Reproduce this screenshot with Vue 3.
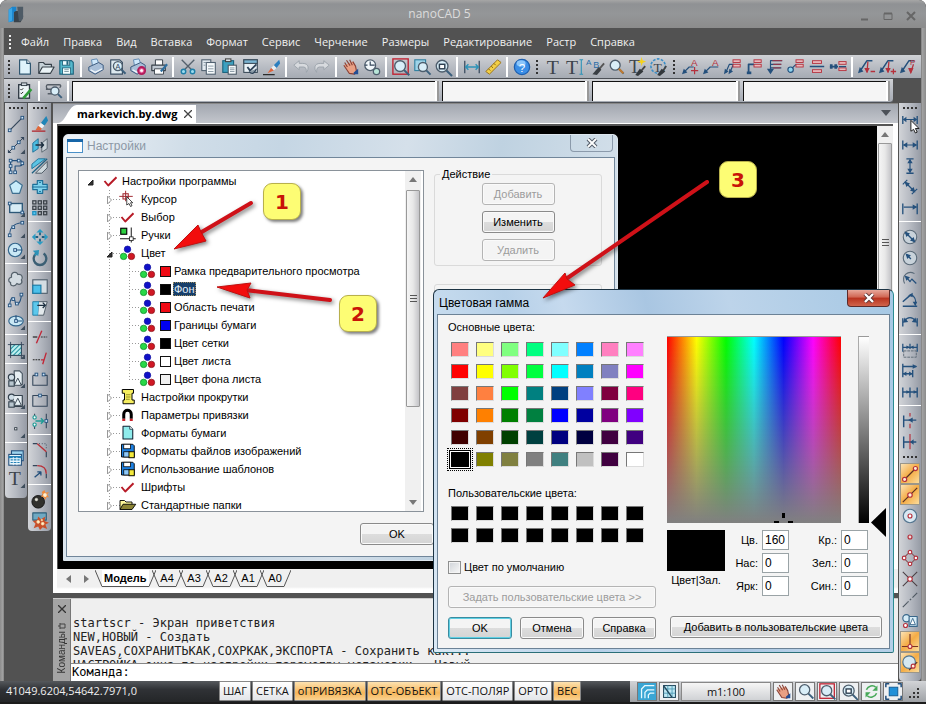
<script setup>
import { ref } from 'vue'

const NAVY = '#24507c'
const DARK = '#34465a'
const RED = '#b5303c'
const TEAL = '#2c93b8'
const SKY = '#8ed4ee'

/* Small builders for the icon markup; every icon sits on a 20 x 20 grid. */
const p = (d, stroke = NAVY, fill = 'none', w = 1.3) =>
  `<path d="${d}" stroke="${stroke}" fill="${fill}" stroke-width="${w}" stroke-linejoin="round"/>`
const c = (x, y, r, stroke = NAVY, fill = 'none', w = 1.3) =>
  `<circle cx="${x}" cy="${y}" r="${r}" stroke="${stroke}" fill="${fill}" stroke-width="${w}"/>`
const f = (d, fill) => `<path d="${d}" fill="${fill}"/>`
const r = (x, y, w, h, stroke = NAVY, fill = 'none', sw = 1.2) =>
  `<rect x="${x}" y="${y}" width="${w}" height="${h}" stroke="${stroke}" fill="${fill}" stroke-width="${sw}"/>`
const t = (x, y, s, ch, fill = DARK, family = 'Liberation Sans') =>
  `<text x="${x}" y="${y}" font-size="${s}" fill="${fill}" font-family="${family}">${ch}</text>`
const node = (x, y) => r(x - 1.5, y - 1.5, 3, 3, NAVY, '#cfe6fa', 1)
const more = f('M20 15v5h-5z', '#3e4d5c')
const lens = (x, y, q) =>
  p(`M${x + q * 0.7} ${y + q * 0.7}L${x + q * 1.7} ${y + q * 1.7}`, '#3b5f7c', 'none', 2.2) +
  c(x, y, q, '#4d5d6c', '#d9eef8', 1.5)
const hand =
  p('M3 5l3 5M5 2.500l4 6M8.500 2l3 6M2 8l6 9 6 1 2-4-1-5-3-5', '#8a4338', '#e9a084', 1.3) +
  f('M13 16l5-4v6h-5z', '#234e94')
const printer =
  p('M6 8l-1-6 6-1 2 5', '#5a86b0', '#cfe8fb', 1) +
  p('M2 10l11-5 5 3v5l-9 5-7-4z', '#3d5b80', '#a9bfd8', 1.1) +
  p('M4 13l5 3 8-4', '#f3f8fc', 'none', 1.4)
const brushTip = f('M18 2l-6 6 3 3 4-5z', '#2a7fc0') + f('M12 8l-3 3 3 3 3-3z', '#e8eef2') + f('M9 11l-4 6 7-3z', '#e0633a')
const redBars = (y) => r(10, y, 8, 3, RED, '#e9b9bc', 1) + r(10, y + 5, 8, 3, RED, '#e9b9bc', 1)
const floppy =
  p('M2 1h15l2 2v15H2z', '#000', '#1c7fe0', 1.2) + r(5, 1, 9, 6, '#000', '#fff', 1) +
  r(5, 11, 8, 7, '#000', '#8ec8f8', 1) + r(12, 11, 7, 8, '#000', '#f4ea3c', 1.2)
const rgb =
  c(10, 5, 4.3, '#1414a0', '#1010c8', 1) + c(4.8, 14.500, 4.3, '#108a28', '#28d848', 1) + c(15.200, 14.500, 4.3, '#8a1018', '#d01824', 1)

const icons = {
  new: p('M4 2h8l4 4v12H4z', '#2f5670', '#dff3fb') + p('M12 2v4h4', '#2f5670', '#fff'),
  open: p('M2 17V5h5l2 2h7v3', '#38424a', '#c7d2d8') + p('M2 17l4-7h13l-4 7z', '#38424a', '#eaf3f6'),
  save: p('M2 3h13l2 2v13H2z', '#23657e', '#55b8cc') + r(5, 3, 8, 5, '#23657e', '#eefbff', 1) + r(5, 11, 9, 7, '#23657e', '#f5ffff', 1) + p('M7 13h5M7 15h5', '#7795a0', 'none', 1) + r(10, 4, 1, 3, '#23657e'),
  print: printer,
  preview: p('M3 2h10l3 3v13H3z', '#3c5064', '#dde9ef') + lens(11, 9, 5) + t(8.300, 12, 8, 'A'),
  plot: printer + c(14, 14, 4, '#b01c5a', '#e04c8c', 2) + c(14, 14, 1.300, '#fff', '#fff', 1),
  printpen: p('M6 8V2h8v6', '#39424b', '#fff', 1.1) + p('M2 8h15v6H2z', '#39424b', '#c0c9d2') + p('M5 12h10v6H5z', '#39424b', '#fff', 1) + p('M19 7l-7 8', '#2f6f9f', 'none', 2.4),
  cut: p('M3 2l11 11M17 2L6 13', '#56626d', 'none', 1.5) + c(5, 15, 2.500, '#1f7fa8', '#9bdcf0', 1.6) + c(15, 15, 2.500, '#1f7fa8', '#9bdcf0', 1.6),
  copy: r(2, 2, 10, 12, '#506070', '#e2eaf0') + r(7, 5, 10, 13, '#506070', '#f6fafc') + p('M9 9h6M9 12h6M9 15h6M4 5h3M4 8h2', '#8594a0', 'none', 1),
  paste: r(2, 3, 12, 13, '#17617c', '#3da0c0') + r(5, 1, 6, 3, '#444', '#dde5ea') + r(8, 8, 9, 10, '#4b5a66', '#f6fafc') + p('M10 11h5M10 13h5M10 15h5', '#8594a0', 'none', 1),
  check: r(2, 2, 15, 14, '#3a4a58', '#e9f1f6') + r(2, 2, 15, 4, '#3a4a58', '#7ab4d2') + p('M6 10l3 4 7-7', '#2d4258', 'none', 2) + p('M8 15c3 4 6 2 8-3', '#2d4258', '#8a9aa6', 1.3),
  match: brushTip + p('M0 18.500h13', '#222', 'none', 1.3),
  undo: p('M8 3L2 8l6 5v-3h5c3 0 3 4 3 6 3-4 3-10-4-10H8z', '#9aa1a9', '#d7dade', 1),
  redo: p('M12 3l6 5-6 5v-3H7c-3 0-3 4-3 6-3-4-3-10 4-10h4z', '#9aa1a9', '#d7dade', 1),
  hand,
  zoomback: c(8, 8, 6, '#4d5d6c', '#f1f7fa', 1.4) + p('M8 4v4h5M2 8h3', '#34465a') + c(15, 15, 3.500, '#4d5d6c', '#b9e6d8', 1.4),
  zoomall: r(1, 1, 17, 17, '#c02030', 'none', 1.500) + lens(9, 9, 6),
  zoomwin: r(2, 2, 12, 12, '#2f7f9f', '#9fd4e8') + lens(11, 10, 5),
  zoomobj: lens(9, 9, 6.500) + r(6, 7, 6, 5, '#2c3e50', '#fff', 1.600),
  dist: p('M2 3v14M18 3v14', '#24384e', 'none', 1.2) + p('M3 10h14M6 7l-3 3 3 3M14 7l3 3-3 3', TEAL, 'none', 1.600),
  ruler: p('M2 15L15 2l4 3L6 18z', '#9a7420', '#f2cf45', 1.1) + p('M5 12l2 2M8 9l2 2M11 6l2 2', '#7a5a10', 'none', 1),
  help: c(10, 10, 8.500, '#1e5fae', '#3b8ee6', 1.400) + `<ellipse cx="9" cy="6" rx="5" ry="3.500" fill="#8cc6fb"/>` + t(6.500, 15, 13, '?', '#fff'),
  text: t(2, 18, 22, 'T', '#3d444c', 'Liberation Serif'),
  textline: t(0, 18, 22, 'T', '#3d444c', 'Liberation Serif') + p('M15 2h4M17 2v16M15 18h4', TEAL, 'none', 1.200),
  spell: t(-1, 8, 9, 'A', '#2b6fa8') + t(7, 11, 10, 'B', '#2b6fa8') + p('M19 6l-6 7', '#555', 'none', 2) + f('M13 10l3 3-5 6-5-1z', '#3a3f44'),
  find: lens(8, 8, 5.500) + p('M12 12l5 5', '#c07a30', 'none', 2.400),
  textstyle: t(0, 17, 20, 'T', '#3d444c', 'Liberation Serif') + f('M14 -1l1 3.500 4 1.500-4 1.500-1 3.500-1-3.500-4-1.500 4-1.500z', '#f5d21c') + p('M18 9l-5 6', '#444', 'none', 2) + f('M12 12l4 3-6 5-3-1z', '#33383c'),
  textset: `<circle cx="9" cy="9" r="8" fill="none" stroke="#3a8fc8" stroke-width="1.800" stroke-dasharray="3 1.500"/>` + t(4, 15, 15, 'T', '#3d444c', 'Liberation Serif') + p('M18 9l-4 6', '#444', 'none', 2) + f('M13 12l4 3-6 5-3-1z', '#33383c'),
  leadA1: p('M2 16l6-6h5', NAVY) + f('M0 18l2-6 4 4z', NAVY) + t(10, 9, 11, 'A', RED) + p('M14 10v8M10 14h8', RED),
  leadA2: p('M2 16l6-6h9', NAVY) + f('M0 18l2-6 4 4z', NAVY) + t(10, 9, 11, 'A', RED),
  lead3: p('M2 16L6 7h5M7 15L10 8', NAVY) + f('M0 18l1-6 4 3zM5 18l1-6 4 3z', NAVY) + redBars(2),
  lead4: p('M4 16V7h6', NAVY, 'none', 2) + f('M2 15h5v3H2z', NAVY) + redBars(2),
  lead5: p('M5 16V3h13M5 7h12M5 11h12', NAVY) + p('M7 3h11M8 7h9M8 11h8', RED, 'none', 1) + f('M1 12h8l-4 6z', NAVY),
  lead6: c(4, 13, 3, NAVY, SKY) + p('M6 11l4-4', NAVY) + redBars(2),
  lead7: r(5, 3, 10, 3, RED, '#e9b9bc', 1) + r(5, 13, 10, 3, RED, '#e9b9bc', 1) + p('M2 9.500h16', NAVY, 'none', 1.600),
  lead8: p('M1 9.500h9', NAVY, 'none', 2) + f('M1 7h3v5H1zM6 7h3v5H6z', NAVY) + r(11, 4, 8, 3, RED, '#e9b9bc', 1) + r(11, 11, 8, 3, RED, '#e9b9bc', 1) + p('M11 9.500h8', NAVY, 'none', 1.300),
  node1: p('M2 15L10 3h6', NAVY, 'none', 1.600) + f('M0 17l2-7 4 5z', NAVY) + p('M11 4l-1 12M14 15h5', RED, 'none', 1.400) + f('M7 11l3 6 3-6z', RED),
  node2: p('M2 15L10 3h6', NAVY, 'none', 1.600) + f('M0 17l2-7 4 5z', NAVY) + p('M11 4l-1 12M13 15h6M16 12v6', RED, 'none', 1.400) + f('M7 11l3 6 3-6z', RED),
  node3: p('M2 15L10 3h6', NAVY, 'none', 1.600) + f('M0 17l2-7 4 5z', NAVY) + t(11, 8, 9, 'P', RED) + p('M15 7l-3 9', RED, 'none', 1.400) + f('M9 11l3 7 3-7z', RED),
  tasks: r(3, 3, 12, 15, '#2f3a44', '#eef6f8', 1.500) + r(6, 1, 6, 3, '#2f3a44', '#cfd8de', 1) + p('M5 8l1 1 2-2M5 12l1 1 2-2', '#222', 'none', 1.100) + p('M17 8l-7 8-2 2', '#2e9a38', 'none', 3),
  search: p('M3 3h13M1 8h6M3 13h5M3 3c-2 0-2 4 0 5M16 3c2 0 2 3 0 3', '#555d66', 'none', 1.500) + lens(11, 10, 4.500),

  line: p('M3 17L17 3', DARK) + node(3, 17) + node(17, 3),
  xline: p('M2 18L18 2', DARK, 'none', 1.100) + node(7, 13) + node(13, 7) + f('M1 19v-4l4 4zM19 1v4l-4-4z', DARK) + more,
  pline: p('M4 17V4h10c4 0 4 6 0 6H9v7', NAVY) + node(4, 17) + node(4, 10) + node(4, 4) + node(13, 4) + node(17, 7) + node(9, 17),
  polygon: p('M10 3l7 5-3 9H6L3 8z', '#3f6f90', '#c8ecfa'),
  rect: r(3, 5, 14, 10, '#2d5878', '#d8ecf5', 1.500) + node(3, 5) + node(17, 15) + more,
  arc: p('M3 17C3 8 7 4 17 3', NAVY, 'none', 1.100) + node(3, 17) + node(7, 8) + node(17, 3) + more,
  circle: c(9, 10, 7.500, '#33668c', '#c9e8f5') + p('M9 10h8', NAVY) + node(9, 10) + more,
  cloud: p('M5 8C4 2 11 1 12 5c5-1 6 4 4 6 2 4-2 6-5 4-2 4-8 3-7-1-3-1-3-5 1-6z', '#56626c', '#d4dce2', 1.400),
  spline: p('M3 16C4 3 9 8 9 12s6 5 7-8', NAVY, 'none', 1.200) + node(3, 16) + node(7, 9) + node(11, 14) + node(16, 4),
  ellipse: `<ellipse cx="10" cy="10" rx="8" ry="5.500" fill="#c9e8f5" stroke="#33668c" stroke-width="1.300"/>` + p('M10 10h7M10 10V4', NAVY) + node(10, 10) + more,
  hatch: r(4, 4, 12, 12, '#2b6070', '#bff0f0', 1) + p('M4 9l5-5M4 14l10-10M7 16l9-9M12 16l4-4', '#2a97a5', 'none', 1.200) + p('M1 4h18M1 16h18M4 1v18M16 1v18', DARK, 'none', 1) + more,
  block: p('M8 1h6l3 3v12H8z', '#4a5763', '#e6eef3') + c(5, 8, 3.500, '#34414d', '#cfdde6') + p('M12 9l4 8H8z', '#34414d', '#e6f0f4', 1) + r(2, 12, 6, 6, '#34414d', '#b8c6cf') + more,
  insert: c(5, 7, 3.500, '#34414d', '#cfdde6') + p('M8 5h9v12H7', '#34414d', '#e6eef3') + p('M12 8l4 8H8z', '#34414d', '#e6f0f4', 1) + r(2, 12, 6, 6, '#34414d', '#b8c6cf') + more,
  point: r(8.500, 8.500, 2.500, 2.500, '#2f3a44', '#fff', 1) + more,
  table: r(5, 2, 13, 11, NAVY, '#9cd4ee') + r(2, 6, 14, 12, NAVY, '#e8f7fd') + p('M2 9h14', '#2482b8', 'none', 2.400) + p('M4 12h10M4 15h10', '#2482b8', 'none', 1.300) + p('M7 9v9M11 9v9', '#e8f7fd', 'none', 1),
  bigtext: t(2, 17, 22, 'T', '#3d444c', 'Liberation Serif') + more,

  erase: f('M17 1l-6 8 4 3 4-6z', '#1f86b8') + f('M11 9l-3 3 4 3 3-3z', '#eef3f5') + f('M8 12l-3 5h6l1-2z', '#df6a3c') + p('M1 18h15', '#b02028', 'none', 1.300),
  mirror: p('M2 8l6-5v11l-6 4z', '#1d6f98', '#4cbce0', 1) + p('M18 3l-6 5v10l6-4z', '#56626c', '#c9d2d8', 1) + p('M5 10h9M11 7l3 3-3 3', '#1c2f40', 'none', 1.400),
  offset: p('M1 13V8l7-6h8z', '#1d6f98', '#5cc4e4', 1) + p('M1 18L18 2', '#1d5f80', 'none', 1.300) + p('M5 18h7l6-6V5z', '#46525d', '#cfd8dd', 1),
  outline: p('M7 3h6v4h5v6h-5v4H7v-4H2V7h5z', '#1d6f98', '#7fd2ec') + p('M1 10h18M9 5h2M9 15h2', '#1d6f98', 'none', 1.200),
  array: [2, 8, 14].map((y) => [2, 8, 14].map((x) => r(x, y, 3.500, 3.500, x === 2 && y === 14 ? '#1d8fc0' : '#3a4148', x === 2 && y === 14 ? '#5cc8f0' : 'none', 1.400)).join('')).join(''),
  move: f('M10 1l4 4h-8zM10 19l4-4h-8zM1 10l4-4v8zM19 10l-4-4v8z', '#2a9cc4') + p('M10 5v3M10 12v3M5 10h3M12 10h3', '#1f5f80', 'none', 2),
  rotate: p('M6 5a7 7 0 1 0 8 0', '#3b5f74', 'none', 2.600) + p('M8 4L4 7', '#2c93b8', 'none', 2) + f('M2 2l7-1-1 7z', '#2c93b8'),
  scale: r(2, 2, 16, 15, '#4c5b68', '#d4dde2') + r(2, 8, 9, 9, '#1d7ba5', '#4cc0ea', 1.300),
  stretch: p('M2 3h7l-1 15H2z', '#1d7ba5', '#5cc8ec', 1) + p('M9 3h9l-4 15H8', '#46525d', '#e3e9ec', 1) + p('M7 7h9M13 4l3 3-3 3', '#1c2f40', 'none', 1.400),
  trim: p('M2 10h5', '#222') + p('M11 10h7', '#222', 'none', 1).replace('/>', ' stroke-dasharray="2 1"/>') + p('M12 3L6 17', '#c02838', 'none', 1.500),
  extend: p('M2 12h9', '#222', 'none', 1.200).replace('/>', ' stroke-dasharray="2 1"/>') + p('M17 4l-4 13M11 12h4', '#c02838', 'none', 1.500),
  breakline: p('M2 6v11h16V6H15M2 6h3', DARK, 'none', 1.200) + node(6, 5) + node(14, 5),
  breakat: p('M8 5H2v12h16V5h-6', DARK, 'none', 1.200) + node(10, 5),
  join: p('M4 2v4M4 14v5M17 2v16', DARK, 'none', 1.200) + c(4, 6, 1.800, '#1f9c96', '#fff') + c(4, 14, 1.800, '#1f9c96', '#fff') + p('M5 10h9M11 7l3 3-3 3', '#1f9c96', 'none', 1.600) + node(17, 10),
  chamfer: p('M2 3h5M17 12v6', DARK, 'none', 1.300) + p('M7 3l10 9', '#b83038', 'none', 1.500) + p('M9 3h8v7', DARK, 'none', 1).replace('/>', ' stroke-dasharray="1 2"/>'),
  fillet: p('M2 4h5M17 13v5', DARK, 'none', 1.300) + p('M7 4c6 0 10 3 10 9', '#b83038', 'none', 1.500) + p('M4 17l7-6M7 11h4v4', NAVY, 'none', 1.500),
  bomb: c(8, 12, 7, '#111', '#30302c', 1) + c(6, 9.500, 1.500, '#e4e4d8', '#e4e4d8', 0.500) + p('M12 6l2-2', '#555', 'none', 2) + f('M15 -1l1 3 4-1-2 3 2 3-3 0-1 3-2-3-3-1 2-2-1-3z', '#f08a3c') + c(15.500, 4.500, 1.500, '#fbe3b8', '#fff'),
  explode: p('M2 1h15v8H2z', '#2c5d78', '#6fa9c2', 1.200) + f('M8 5l3 3 5-3-1 5 5 2-4 2 2 5-5-2-3 3-2-4-5 2 2-5-3-3 5-1z', '#c8502a') + c(8, 11, 1.500, '#f8d8a0', '#fff4d8', 1) + c(13, 13, 1.500, '#f8d8a0', '#fff4d8', 1) + c(12, 9, 0.800, '#f8d8a0', '#fff', 1),

  dimcur: p('M2 1v9M18 1v9', NAVY, 'none', 1.500) + p('M3 5h14', NAVY) + f('M2 5l4-3v6zM18 5l-4-3v6z', NAVY) + p('M11 6v12l3-2 2 4 2-1-2-4h4z', '#111', '#fff', 1),
  dimh: p('M2 5v10M18 5v10', NAVY, 'none', 1.500) + p('M3 10h14', NAVY) + f('M2 10l5-3v6zM18 10l-5-3v6z', NAVY),
  dimv: p('M6 2h8M6 18h8', NAVY, 'none', 1.500) + p('M10 3v14', NAVY) + f('M10 2l-3 5h6zM10 18l-3-5h6z', NAVY),
  dima: p('M2 7l5-5M12 18l6-6', NAVY, 'none', 1.300) + p('M5 5l10 10', NAVY, 'none', 1.400) + f('M4 4l6 2-4 4zM16 16l-6-2 4-4z', NAVY),
  dimb: p('M2 5v12M18 5v12', NAVY, 'none', 1.500) + p('M3 9h14', NAVY) + f('M18 9l-5-3v6z', NAVY),
  diam: c(10, 10, 7.500, '#5a6a78', '#c8d2da', 1.200) + p('M5 5l10 10', NAVY, 'none', 1.500) + f('M4 4l6 2-4 4zM16 16l-6-2 4-4z', NAVY),
  radius: c(10, 10, 7.500, '#5a6a78', '#c8d2da', 1.200) + p('M6 6l5 5', NAVY, 'none', 1.500) + f('M5 5l6 2-4 4z', NAVY),
  jog: p('M4 15C0 6 8 0 15 4', '#5a6a78', 'none', 1.200) + p('M6 8l4 5 2-3 5 5', NAVY, 'none', 1.300) + f('M4 6l6 2-4 4z', NAVY),
  angle: p('M2 17h16M2 12L11 4', NAVY, 'none', 1.600) + p('M11 4c4 2 6 6 5 11', NAVY) + f('M13 12l5 0-2 5zM8 5l5-3 0 5z', NAVY),
  arclen: p('M2 7v9M18 7v9', NAVY, 'none', 1.500) + p('M4 10c3-5 9-5 12 0', NAVY) + f('M2 12l2-6 4 5zM18 12l-2-6-4 5z', NAVY),
  chain: p('M2 3v9M10 3v6M18 3v9M2 7h16', NAVY, 'none', 1.400) + f('M10 7l-4-2v4zM10 7l4-2v4z', NAVY) + `<rect x="3" y="11" width="14" height="7" fill="none" stroke="#5b6874" stroke-dasharray="3 1"/>`,
  base: p('M2 2v15M13 9v8M2 5h15M2 13h11', NAVY, 'none', 1.500) + f('M18 5l-5-2.500v5zM13 13l-4-2.500v5zM2 13l4-2.500v5z', NAVY),
  cont: p('M2 5v11M10 5v11M18 5v11M2 10h16', NAVY, 'none', 1.500) + f('M10 10l-4-2v4zM18 10l-4-2v4z', NAVY),
  ord1: p('M3 4v13M3 9h14', NAVY, 'none', 1.600) + p('M10 1v4M10 13v5', RED) + f('M8 9l5-3v6z', NAVY),
  ord2: p('M3 4v13M3 10h14', NAVY, 'none', 1.600) + p('M10 1v17', RED) + f('M10 10l4-3v6z', NAVY),

  snapend: p('M5 15L15 5', '#5a3024') + c(4, 16, 2.300, RED, '#fff0d8') + c(16, 4, 2.300, RED, '#fff0d8'),
  snapmid: p('M2 18L18 2', '#5a3024') + c(10, 10, 2.500, RED, '#fff0d8'),
  snapcen: c(10, 10, 7.500, '#557690', '#d8e8f2') + c(10, 10, 2.200, RED, '#fff'),
  snapnode: c(10, 10, 2.200, RED, '#f0d8d8'),
  snapquad: p('M10 3l7 7-7 7-7-7z', '#8a5a60', 'none', 1.200) + c(10, 3.500, 2, RED, '#fff') + c(16.500, 10, 2, RED, '#fff') + c(10, 16.500, 2, RED, '#fff') + c(3.500, 10, 2, RED, '#fff'),
  snapint: p('M2 2l16 16M18 2L2 18', '#4b4146', 'none', 1.200) + c(10, 10, 2.500, RED, '#fff'),
  snapext: p('M2 18l5-5M13 7l5-5', '#4f5963') + p('M7 13l6-6', '#4f5963').replace('/>', ' stroke-dasharray="2 2"/>'),
  snapins: c(6, 7, 4, '#39678a', '#d6ecf7') + p('M9 5h9v11H9z', '#39678a', '#d6ecf7') + p('M13 7l3 7h-6z', '#39678a', '#fff', 1) + c(5, 15, 2.200, RED, '#fff'),
  snapper: p('M10 1v14M1 15h18', '#7a3424') + c(10, 15, 2.200, RED, '#fff0d8'),
  snaptan: c(9, 9, 7, '#4f7590', '#d5e8f1') + p('M18 9l-9 9', '#5a3024') + c(13.500, 13.500, 2.200, RED, '#fff0d8'),

  mark: p('M2 10l5 6 11-11', '#b81c28', 'none', 2.600),
  cursor: r(4, 3, 7, 7, '#a02830', 'none', 1.400) + p('M7.500 -1v14M-1 6.500h18', '#a02830', 'none', 1.300) + p('M9 7v11l3-2 2 4 2-1-2-4h3z', '#111', '#fff', 1),
  grips: r(1, 1, 8, 8, '#000', '#2cd040', 1.500) + p('M0 15h21M15 0v20', '#111', 'none', 1.300) + r(12.500, 12.500, 5, 5, '#111', '#fff', 1),
  rgb,
  scroll: p('M3 0h15v5h-2v9h3v5H4v-5h2V5H3z', '#000', '#f6ee60', 1.300) + p('M8 7h6M8 10h6M8 13h5', '#8a8420', 'none', 1.200),
  magnet: p('M5 15V9c0-7 10-7 10 0v6', '#000', 'none', 4) + p('M3 16.500h4M13 16.500h4', '#c82028', 'none', 3),
  paper: p('M4 1h9l4 4v13H4z', '#123', '#8fecec', 1.400) + p('M13 1v4h4', '#123', '#fff', 1),
  floppy,
  folder: p('M0 16V4h6l2 2h8v3', '#000', '#fdf79a', 1.200) + p('M0 16l4-7h17l-5 7z', '#000', '#8c8434', 1.200),

  model: p('M3 18V7l4-4h11', '#e8faff', 'none', 1.500) + p('M7 18v-7l3-3h8M11 18v-4l2-2h5', '#e8faff', 'none', 1.500),
  gridpen: r(3, 3, 14, 14, '#23475c', '#bfe8f4') + p('M3 7h14M3 12h14M8 3v14M13 3v14', '#4c9ab4', 'none', 1) + p('M3 3l10 14', '#23475c', '#fff', 1.600),
  lens: lens(9, 8, 6),
  refresh: p('M4 8c2-5 8-6 11-3M16 12c-2 5-8 6-11 3', '#46a858', 'none', 1.800) + f('M17 3v6h-6zM3 17v-6h6z', '#46a858'),
  full: r(5, 5, 10, 10, '#14619a', '#2090d8') + p('M1 5V1h4M15 1h4v4M19 15v4h-4M5 19H1v-4', '#24507c', 'none', 1.800),
}

const menus = ['Файл', 'Правка', 'Вид', 'Вставка', 'Формат', 'Сервис', 'Черчение', 'Размеры', 'Редактирование', 'Растр', 'Справка']

/* '|' is a separator, ':' is a grip that opens the next group. */
const split = (s) => s.split(' ')
const mainTools = split('new open save | print preview plot printpen | cut copy paste check match | undo redo | hand zoomback | zoomall zoomwin zoomobj | dist ruler | help : text textline spell find textstyle textset : leadA1 leadA2 lead3 lead4 lead5 lead6 lead7 lead8 | node1 node2 node3')
const drawTools = split('line xline pline polygon rect arc circle | cloud spline ellipse | hatch | block insert | point | table bigtext')
const editTools = split('erase mirror offset outline array | move rotate | scale stretch | trim extend breakline breakat join | chamfer fillet | bomb explode')
const dimTools = split('dimcur dimh dimv dima dimb | diam radius jog angle arclen | chain base cont | ord1 ord2 : snapend snapmid snapcen snapnode snapquad snapint snapext snapins snapper snaptan')
const activeTools = ['snapend', 'snapmid', 'snapper', 'snaptan']
const layerFields = ['layer', 'color', 'linetype', 'weight']

const tree = [
  { level: 0, icon: 'mark', label: 'Настройки программы' },
  { level: 1, icon: 'cursor', label: 'Курсор' },
  { level: 1, icon: 'mark', label: 'Выбор' },
  { level: 1, icon: 'grips', label: 'Ручки' },
  { level: 1, icon: 'rgb', label: 'Цвет', open: true },
  { level: 2, icon: 'rgb', label: 'Рамка предварительного просмотра', color: '#f00a14' },
  { level: 2, icon: 'rgb', label: 'Фон', color: '#000000', selected: true },
  { level: 2, icon: 'rgb', label: 'Область печати', color: '#f00a14' },
  { level: 2, icon: 'rgb', label: 'Границы бумаги', color: '#0000f0' },
  { level: 2, icon: 'rgb', label: 'Цвет сетки', color: '#000000' },
  { level: 2, icon: 'rgb', label: 'Цвет листа', color: '#ffffff' },
  { level: 2, icon: 'rgb', label: 'Цвет фона листа', color: '#f0f0f0', last: true },
  { level: 1, icon: 'scroll', label: 'Настройки прокрутки' },
  { level: 1, icon: 'magnet', label: 'Параметры привязки' },
  { level: 1, icon: 'paper', label: 'Форматы бумаги' },
  { level: 1, icon: 'floppy', label: 'Форматы файлов изображений' },
  { level: 1, icon: 'floppy', label: 'Использование шаблонов' },
  { level: 1, icon: 'mark', label: 'Шрифты' },
  { level: 1, icon: 'folder', label: 'Стандартные папки' },
]

const basicColors = (
  'ff8080 ffff80 80ff80 00ff80 80ffff 0080ff ff80c0 ff80ff ' +
  'ff0000 ffff00 80ff00 00ff40 00ffff 0080c0 8080c0 ff00ff ' +
  '804040 ff8040 00ff00 008080 004080 8080ff 800040 ff0080 ' +
  '800000 ff8000 008000 008040 0000ff 0000a0 800080 8000ff ' +
  '400000 804000 004000 004040 000080 000040 400040 400080 ' +
  '000000 808000 808040 808080 408080 c0c0c0 400040 ffffff'
).split(' ').map((v) => '#' + v)
const picked = ref(40)

const channels = ref([
  { id: 'hue', label: 'Цв.', value: '160' },
  { id: 'red', label: 'Кр.:', value: '0' },
  { id: 'sat', label: 'Нас:', value: '0' },
  { id: 'green', label: 'Зел.:', value: '0' },
  { id: 'lum', label: 'Ярк:', value: '0' },
  { id: 'blue', label: 'Син.:', value: '0' },
])

const sheets = ['Модель', 'A4', 'A3', 'A2', 'A1', 'A0']
const log = [
  'startscr - Экран приветствия',
  'NEW,НОВЫЙ - Создать',
  'SAVEAS,СОХРАНИТЬКАК,СОХРКАК,ЭКСПОРТА - Сохранить как...',
  'НАСТРОЙКА окна по настройки параметры установки - Новый',
]
const modes = [
  { label: 'ШАГ' },
  { label: 'СЕТКА' },
  { label: 'оПРИВЯЗКА', on: true },
  { label: 'ОТС-ОБЪЕКТ', on: true },
  { label: 'ОТС-ПОЛЯР' },
  { label: 'ОРТО' },
  { label: 'ВЕС', on: true },
]
const viewTools = ['hand', 'lens', 'zoomall', 'zoomobj', 'refresh', 'full']
</script>

<template>
  <div class="app">
    <header class="titlebar">
      <svg class="logo" viewBox="0 0 20 20">
        <path d="M8 6h5c5 0 6 3 6 7l-3 6H8z" fill="#39424a" />
        <path d="M12 1h7v12c0 3-2 5-5 5z" fill="#4e5b66" />
        <path d="M2 4l4-3h5v5c-2 0-3 1-3 3v9l-6 1z" fill="#1a84cc" />
        <path d="M2 4l4-2v15l-4 2z" fill="#3aa6e6" />
      </svg>
      <h1>nanoCAD 5</h1>
      <div class="winbtns">
        <button aria-label="Свернуть"><svg viewBox="0 0 12 12"><path d="M2 9.500h7" stroke="#666" stroke-width="2" /></svg></button>
        <button aria-label="Развернуть"><svg viewBox="0 0 12 12"><path d="M2 3.500h8v6H2z" fill="none" stroke="#666" /><path d="M2 3.500h8" stroke="#666" stroke-width="2" /></svg></button>
        <button aria-label="Закрыть"><svg viewBox="0 0 12 12"><path d="M2 2l8 8M10 2l-8 8" stroke="#666" stroke-width="2" /></svg></button>
      </div>
    </header>

    <div class="shell">
      <nav class="menubar">
        <i class="grip"></i>
        <a v-for="m in menus" :key="m" href="#">{{ m }}</a>
      </nav>

      <div class="toolbar">
        <i class="grip dark"></i>
        <template v-for="(name, i) in mainTools" :key="i">
          <i v-if="name === '|'" class="sep"></i>
          <i v-else-if="name === ':'" class="grip dark wide"></i>
          <button v-else class="tool" :aria-label="name"><svg viewBox="0 0 20 20" v-html="icons[name]"></svg></button>
        </template>
      </div>

      <div class="toolbar props">
        <i class="grip dark"></i>
        <button class="tool" aria-label="tasks"><svg viewBox="0 0 20 20" v-html="icons.tasks"></svg></button>
        <i class="sep"></i>
        <button class="tool" aria-label="search"><svg viewBox="0 0 20 20" v-html="icons.search"></svg></button>
        <i class="sep"></i>
        <input v-for="field in layerFields" :key="field" class="field" :class="field" type="text" :aria-label="field" />
      </div>

      <main class="body">
        <div v-for="(bar, b) in [drawTools, editTools]" :key="b" class="rail" :class="{ tail: b === 0 }">
          <i class="vgrip"></i>
          <template v-for="(name, i) in bar" :key="i">
            <i v-if="name === '|'" class="vsep"></i>
            <button v-else class="tool" :aria-label="name"><svg viewBox="0 0 20 20" v-html="icons[name]"></svg></button>
          </template>
        </div>

        <section class="center">
          <div class="doc">
            <div class="doctabs">
              <svg class="slant" viewBox="0 0 19 18"><path d="M0 18C8 18 10 0 19 0V18z" fill="#fff" /></svg>
              <a class="doctab" href="#">markevich.by.dwg
                <svg viewBox="0 0 8 8"><path d="M0 0l8 8M8 0L0 8" stroke="#444" stroke-width="1.300" /></svg>
              </a>
              <svg class="drop" viewBox="0 0 10 6"><path d="M0 0h10L5 6z" fill="#4c5158" /></svg>
            </div>
            <div class="view">
              <div class="canvas"></div>
              <div class="scroll">
                <svg viewBox="0 0 8 5"><path d="M0 5h8L4 0z" fill="#777" /></svg>
                <i class="thumb"><b></b></i>
              </div>
            </div>
            <div class="sheets">
              <svg class="arrow" viewBox="0 0 6 8"><path d="M6 0v8L1 4z" fill="#777" /></svg>
              <svg class="arrow" viewBox="0 0 6 8"><path d="M0 0v8l5-4z" fill="#777" /></svg>
              <a v-for="(s, i) in sheets" :key="s" href="#" :class="{ current: i === 0 }">
                <svg viewBox="0 0 7 17"><path d="M0 0l7 16.500" stroke="#555" /></svg>
                <span>{{ s }}</span>
                <svg viewBox="0 0 7 17"><path d="M7 0L0 16.500" stroke="#555" /></svg>
              </a>
            </div>
          </div>

          <div class="console">
            <div class="side">
              <svg viewBox="0 0 8 8"><path d="M0 0l8 8M8 0L0 8" stroke="#333" stroke-width="1.300" /></svg>
              <svg viewBox="0 0 8 8"><path d="M0 4h2M2 1v6M2 2h5v4H2" fill="none" stroke="#444" /></svg>
              <span>Команды</span>
            </div>
            <div class="output">
              <div class="log"><p v-for="l in log" :key="l">{{ l }}</p></div>
              <div class="prompt">
                <label for="command">Команда:</label>
                <input id="command" type="text" />
              </div>
            </div>
          </div>
        </section>

        <div class="rail right">
          <i class="vgrip"></i>
          <template v-for="(name, i) in dimTools" :key="i">
            <i v-if="name === '|'" class="vsep"></i>
            <i v-else-if="name === ':'" class="vgrip mid"></i>
            <button v-else class="tool" :class="{ active: activeTools.includes(name) }" :aria-label="name"><svg viewBox="0 0 20 20" v-html="icons[name]"></svg></button>
          </template>
        </div>
      </main>
    </div>

    <footer class="status">
      <span class="coords">41049.6204,54642.7971,0</span>
      <div class="modes">
        <button v-for="m in modes" :key="m.label" :class="{ on: m.on }">{{ m.label }}</button>
      </div>
      <div class="views">
        <button class="sq blue" aria-label="model"><svg viewBox="0 0 20 20" v-html="icons.model"></svg></button>
        <button class="sq" aria-label="grid"><svg viewBox="0 0 20 20" v-html="icons.gridpen"></svg></button>
        <button class="ratio">m1:100</button>
        <button v-for="v in viewTools" :key="v" class="sq" :aria-label="v"><svg viewBox="0 0 20 20" v-html="icons[v]"></svg></button>
        <svg class="resize" viewBox="0 0 14 14">
          <path d="M10 2h2v2h-2zM6 6h2v2H6zM10 6h2v2h-2zM2 10h2v2H2zM6 10h2v2H6zM10 10h2v2h-2z" fill="#333" />
        </svg>
      </div>
    </footer>

    <section class="dialog settings">
      <header>
        <svg class="wicon" viewBox="0 0 16 14"><rect x="0.500" y="0.500" width="15" height="13" fill="#fff" stroke="#4a90c8" /><path d="M0 1.500h16" stroke="#1766a8" stroke-width="3" /></svg>
        <h2>Настройки</h2>
        <button class="close" aria-label="Закрыть"><svg viewBox="0 0 12 10"><path d="M2 1l8 8M10 1L2 9" stroke="#555f6c" stroke-width="4" /><path d="M2 1l8 8M10 1L2 9" stroke="#fff" stroke-width="1.800" /></svg></button>
      </header>
      <div class="content">
        <div class="left">
          <div class="treebox">
            <ul>
              <li v-for="n in tree" :key="n.label">
                <svg v-if="n.level === 0" class="g0" viewBox="0 0 24 18"><path d="M14 8v5H9z" fill="#333" stroke="#222" /></svg>
                <svg v-else-if="n.level === 1" class="g1" viewBox="0 0 41 18">
                  <path d="M30.500 0v18M34 9.500h7" stroke="#999" stroke-dasharray="1 2" />
                  <path v-if="n.open" d="M33 8v5h-5z" fill="#333" stroke="#222" />
                  <path v-else d="M28.500 6v8l4-4z" fill="#fff" stroke="#999" />
                </svg>
                <svg v-else class="g2" viewBox="0 0 61 18">
                  <path :d="n.last ? 'M30.500 0v18M50.500 0v9M50 9.500h11' : 'M30.500 0v18M50.500 0v18M50 9.500h11'" fill="none" stroke="#999" stroke-dasharray="1 2" />
                </svg>
                <svg class="nicon" viewBox="0 0 20 20" v-html="icons[n.icon]"></svg>
                <i v-if="n.color" class="chip" :style="{ background: n.color }"></i>
                <span :class="['l' + n.level, { selected: n.selected }]">{{ n.label }}</span>
              </li>
            </ul>
            <div class="tscroll">
              <svg viewBox="0 0 8 5"><path d="M0 5h8L4 0z" fill="#777" /></svg>
              <i class="thumb"><b></b></i>
              <svg viewBox="0 0 8 5"><path d="M0 0h8L4 5z" fill="#777" /></svg>
            </div>
          </div>
          <button class="btn ok">OK</button>
        </div>
        <div class="actions">
          <fieldset>
            <legend>Действие</legend>
            <button class="btn" disabled>Добавить</button>
            <button class="btn">Изменить</button>
            <button class="btn" disabled>Удалить</button>
          </fieldset>
          <fieldset class="empty"></fieldset>
        </div>
      </div>
    </section>

    <section class="dialog palette">
      <header>
        <h2>Цветовая гамма</h2>
        <button class="close" aria-label="Закрыть"><svg viewBox="0 0 12 10"><path d="M2 1l8 8M10 1L2 9" stroke="#5c3434" stroke-width="4" /><path d="M2 1l8 8M10 1L2 9" stroke="#fff" stroke-width="2.400" /></svg></button>
      </header>
      <div class="content">
        <div class="colors">
          <h3>Основные цвета:</h3>
          <div class="swatches">
            <button v-for="(col, i) in basicColors" :key="i" :class="{ picked: picked === i }" :style="{ background: col }" :aria-label="col" @click="picked = i"></button>
          </div>
          <h3 class="second">Пользовательские цвета:</h3>
          <div class="swatches custom">
            <button v-for="i in 16" :key="i" class="black" :aria-label="'custom ' + i"></button>
          </div>
          <label class="tick"><input type="checkbox" />Цвет по умолчанию</label>
          <button class="btn define" disabled>Задать пользовательские цвета &gt;&gt;</button>
          <div class="row">
            <button class="btn default">OK</button>
            <button class="btn">Отмена</button>
            <button class="btn">Справка</button>
          </div>
        </div>
        <div class="mixer">
          <div class="pickers">
            <div class="spectrum">
              <svg viewBox="0 0 20 10"><path d="M8 0h3v5H8zM0 8h5v2H0zM14 8h5v2h-5z" /></svg>
            </div>
            <div class="lum"></div>
            <svg class="pointer" viewBox="0 0 15 29"><path d="M15 0v29L0 14.500z" /></svg>
          </div>
          <div class="values">
            <div class="sample"><i></i><span>Цвет|Зал.</span></div>
            <div class="channels">
              <template v-for="ch in channels" :key="ch.id">
                <label :for="ch.id">{{ ch.label }}</label>
                <input :id="ch.id" v-model="ch.value" type="text" />
              </template>
            </div>
          </div>
          <button class="btn add">Добавить в пользовательские цвета</button>
        </div>
      </div>
    </section>

    <svg class="arrows">
      <g class="long">
        <path d="M251 203L200 233" />
        <path d="M330 300L245 290" />
        <path d="M707 182L566 279" />
      </g>
      <g class="heads">
        <path d="M174 249L198 225L201 232L206 241z" />
        <path d="M217 287L251 283L247 290L250 298z" />
        <path d="M543 298L565 273L567 279L575 285z" />
      </g>
    </svg>
    <div class="note one">1</div>
    <div class="note two">2</div>
    <div class="note three">3</div>
  </div>
</template>

<style>
body {
  background: #fff;
}
</style>

<style scoped>
* {
  box-sizing: border-box;
}
button,
input {
  font: inherit;
  margin: 0;
  padding: 0;
  border: 0;
  border-radius: 0;
  background: none;
  color: inherit;
}
a {
  color: inherit;
  text-decoration: none;
}
h1,
h2,
h3,
p,
ul {
  margin: 0;
  padding: 0;
  font-weight: normal;
  list-style: none;
}
svg {
  display: block;
  flex: none;
  fill: none;
}
.app {
  position: relative;
  display: flex;
  flex-direction: column;
  height: 100vh;
  min-height: 704px;
  padding-bottom: 2px;
  overflow: hidden;
  font: 11px/14px "Open Sans", "Noto Sans", sans-serif;
  color: #000;
  background: #1c1c1c;
  border-radius: 7px 7px 0 0;
}
.titlebar {
  display: flex;
  align-items: center;
  height: 28px;
  padding: 0 9px 0 7px;
  color: #dcdcdc;
  background: linear-gradient(#a6a6a6 0, #8f9194 4px, #949698 50%, #8c8c8c);
}
.logo {
  width: 17px;
  height: 17px;
}
h1 {
  flex: 1;
  padding-right: 4px;
  font-size: 12px;
  text-align: center;
}
.winbtns {
  display: flex;
  gap: 11px;
}
.winbtns svg {
  width: 12px;
  height: 12px;
}
.winbtns button {
  padding-top: 4px;
}
.shell {
  display: flex;
  flex-direction: column;
  flex: 1;
  min-height: 0;
  padding: 0 5px 0 4px;
  background: #525252 linear-gradient(90deg, #8d8d8d, #a4a4a4 3px, #777 4px, #777 50%, #6e6e6e calc(100% - 5px), #a4a4a4 calc(100% - 4px), #8c8c8c);
}
.menubar {
  display: flex;
  align-items: center;
  gap: 14px;
  height: 27px;
  padding: 0 5px;
  color: #f0f0f0;
  background: #525252;
}
.grip {
  flex: none;
  width: 2px;
  height: 14px;
  background: repeating-linear-gradient(#eee 0 2px, transparent 2px 4px);
}
.menubar .grip {
  margin-right: -4px;
}
.grip.dark {
  width: 10px;
  height: 14px;
  background: repeating-linear-gradient(#333 0 2px, transparent 2px 4px) 4px 0 / 2px 14px no-repeat;
}
.grip.wide {
  width: 11px;
}
.toolbar {
  display: flex;
  align-items: center;
  height: 24px;
  border-bottom: 1px solid #4c5056;
  background: linear-gradient(#cfd1d5, #b9bdc4 50%, #a6abb3);
  box-shadow: 0 0 0 30px #525252;
  clip-path: inset(0);
}
.tool {
  display: flex;
  flex: none;
  align-items: center;
  justify-content: center;
  width: 21px;
  height: 21px;
}
.tool svg {
  width: 18px;
  height: 18px;
  overflow: visible;
}
.sep {
  flex: none;
  width: 8px;
  height: 20px;
  border-left: 3px solid transparent;
  background: linear-gradient(90deg, #fff 2px, transparent 2px);
  background-clip: padding-box;
}
.props {
  clip-path: inset(0 -28px 0 0);
  margin-right: 28px;
  border-radius: 0 0 4px 0;
}
.field {
  flex: 143 1 0;
  min-width: 0;
  height: 20px;
  margin: 1px 7px 0 0;
  border-top: 1px solid #111;
  border-left: 1px solid #111;
  background: #f5f5f5;
  box-shadow: 2px 0 0 #fff, 4px 0 0 #999;
}
.field.layer {
  flex-grow: 363;
}
.body {
  display: flex;
  flex: 1;
  align-items: flex-start;
  min-height: 0;
  padding-left: 1px;
  background: #525252;
}
.rail {
  display: flex;
  flex: none;
  flex-direction: column;
  align-items: center;
  width: 22px;
  margin-right: 1px;
  border-radius: 0 0 4px 4px;
  background: linear-gradient(90deg, #d2d4d8, #b6bac2 50%, #969ba5);
}
.rail + .rail {
  width: 23px;
}
.rail.tail {
  padding-bottom: 9px;
}
.rail.right {
  align-self: stretch;
  width: 22px;
  margin: 0;
  overflow: hidden;
}
.vgrip {
  flex: none;
  width: 14px;
  height: 10px;
  background: repeating-linear-gradient(90deg, #333 0 2px, transparent 2px 4px) 0 4px / 14px 2px no-repeat;
}
.vgrip.mid {
  height: 11px;
}
.vsep {
  flex: none;
  width: 100%;
  height: 8px;
  background: linear-gradient(#fff, #fff) 0 3px / 100% 1px no-repeat;
}
.active {
  width: 20px;
  height: 21px;
  border: 1px solid #9b9689;
  background: linear-gradient(135deg, #fbe2b4, #f4ac45 50%, #fbdc9c);
}
.center {
  display: flex;
  flex: 1;
  flex-direction: column;
  align-self: stretch;
  min-width: 0;
  margin: 0 1px;
}
.doc {
  display: flex;
  flex: 1;
  flex-direction: column;
  min-height: 0;
  background: #fff;
}
.doctabs {
  display: flex;
  align-items: flex-end;
  height: 20px;
  padding: 0 7px 0 5px;
  border-top: 1px solid #888;
  background: linear-gradient(#a2a7b0, #c3c6cc);
}
.slant {
  width: 19px;
  height: 18px;
}
.doctab {
  display: flex;
  align-items: center;
  gap: 7px;
  height: 18px;
  padding-right: 4px;
  font-weight: bold;
  background: #fff;
}
.doctab svg {
  width: 8px;
  height: 8px;
}
.drop {
  width: 10px;
  height: 6px;
  margin: 0 0 7px auto;
}
.view {
  display: flex;
  flex: 1;
  min-height: 0;
  margin: 1px 5px 0 4px;
  border-top: 2px solid #555;
  border-left: 1px solid #555;
}
.canvas {
  flex: 1;
  background: #000;
}
.scroll,
.tscroll {
  display: flex;
  flex-direction: column;
  align-items: center;
  width: 16px;
  padding: 6px 0;
  background: #f0f0f0;
}
.scroll svg,
.tscroll svg {
  width: 8px;
  height: 5px;
}
.thumb {
  display: flex;
  align-items: center;
  justify-content: center;
  width: 14px;
  height: 217px;
  margin-top: 8px;
  border: 1px solid #999;
  border-radius: 1px;
  background: linear-gradient(90deg, #f5f5f5, #e8e8e8 50%, #c4c4c8);
}
.thumb b {
  width: 7px;
  height: 8px;
  background: repeating-linear-gradient(#555 0 1px, transparent 1px 3px);
}
.scroll .thumb {
  height: 200px;
  margin-top: 6px;
}
.sheets {
  display: flex;
  align-items: flex-start;
  height: 24px;
  margin-left: 4px;
  padding-top: 1px;
  font: 11px/17px "Liberation Sans", sans-serif;
  background: linear-gradient(#f0f0f0 18px, #fff 20px);
}
.arrow {
  width: 6px;
  height: 8px;
  margin: 5px 13px 0 0;
}
.arrow:first-child {
  margin-left: 8px;
}
.sheets a {
  display: flex;
  margin-left: -4px;
}
.sheets a svg {
  width: 7px;
  height: 17px;
}
.sheets span {
  height: 17px;
  min-width: 17px;
  border-bottom: 1px solid #555;
  text-align: center;
}
.sheets .current {
  margin-left: -8px;
  font-weight: bold;
  background: linear-gradient(#fff, #fff) 7px 0 / calc(100% - 14px) 17px no-repeat;
}
.sheets .current span {
  padding: 0 2px;
}
.console {
  display: flex;
  flex: none;
  height: 83px;
  margin-top: 5px;
  border-top: 1px solid #ccc;
  background: #efefef;
}
.side {
  display: flex;
  flex-direction: column;
  align-items: center;
  width: 18px;
  padding-top: 6px;
  overflow: hidden;
  color: #333;
  background: #a4a4a4;
  border-right: 1px solid #777;
}
.side svg {
  width: 8px;
  height: 8px;
  margin-bottom: 9px;
}
.side svg + svg {
  margin-bottom: 1px;
}
.side span {
  font: 10px/12px "Liberation Sans", sans-serif;
  writing-mode: vertical-rl;
  transform: rotate(180deg);
}
.output {
  display: flex;
  flex: 1;
  flex-direction: column;
  min-width: 0;
  font: 12px/14px "DejaVu Sans Mono", monospace;
}
.log {
  flex: 1;
  min-height: 0;
  padding: 17px 2px 0;
  overflow: hidden;
  color: #222;
  white-space: nowrap;
}
.prompt {
  display: flex;
  height: 18px;
  padding: 1px 1px 0;
  border-top: 1px solid #888;
  background: #fff;
}
.prompt input {
  flex: 1;
}
.status {
  display: flex;
  flex: none;
  align-items: stretch;
  height: 21px;
  color: #eee;
  background: linear-gradient(#55585c, #303236 40%, #242628);
}
.coords {
  width: 219px;
  padding: 3px 0 0 6px;
}
.modes {
  display: flex;
  flex: 1;
  gap: 1px;
  color: #111;
}
.modes button {
  height: 20px;
  padding: 0 3px;
  border: 1px solid #888;
  border-radius: 1px;
  background: linear-gradient(#fff, #e3e5e9);
}
.modes .on {
  background: linear-gradient(#fde2b0, #f6b65a 60%, #fbd290);
}
.views {
  display: flex;
  flex: none;
  gap: 2px;
  padding: 1px 5px 0 7px;
  color: #111;
  background: linear-gradient(#d2d4d7, #9fa2a6);
}
.sq {
  display: flex;
  align-items: center;
  justify-content: center;
  width: 20px;
  height: 19px;
  border: 1px solid #777;
  background: #eef0f2;
}
.sq svg {
  width: 17px;
  height: 17px;
}
.sq.blue {
  background: #3aa6d4;
}
.ratio {
  width: 90px;
  height: 19px;
  border: 1px solid #888;
  background: linear-gradient(#f6f6f6, #d0d2d5);
}
.resize {
  width: 14px;
  height: 14px;
  margin: 4px 0 0 2px;
}
.dialog {
  position: absolute;
  display: flex;
  flex-direction: column;
  font: 11px/14px "Liberation Sans", sans-serif;
}
.dialog > header {
  display: flex;
  align-items: center;
  height: 24px;
}
.dialog .content {
  display: flex;
  flex: 1;
  background: #f4f4f4;
}
.close {
  display: flex;
  align-items: center;
  justify-content: center;
  align-self: flex-start;
  width: 43px;
  height: 17px;
  margin-left: auto;
  border: 1px solid #8b9aab;
  border-top: 0;
  border-radius: 0 0 4px 4px;
}
.close svg {
  width: 12px;
  height: 10px;
}
.settings {
  left: 63px;
  top: 134px;
  width: 555px;
  height: 427px;
  padding: 0 2px 3px;
  border: 1px solid #dde6ee;
  border-radius: 5px 5px 0 0;
  background: linear-gradient(100deg, #eef3f7, #d0dde8 20%, #c5d6e4 35%, #d5e0ea 55%, #bfd2e1 70%, #dde6ee);
}
.settings > header {
  padding: 0 2px 0 1px;
  color: #8c98a5;
}
.wicon {
  width: 16px;
  height: 14px;
}
h2 {
  font-size: 12px;
}
.settings h2 {
  padding-left: 4px;
}
.settings .content {
  gap: 10px;
  padding: 12px 12px 11px 11px;
  border: 1px solid #71869a;
}
.left {
  display: flex;
  flex-direction: column;
  width: 346px;
}
.treebox {
  display: flex;
  height: 342px;
  border: 1px solid #8a929a;
  background: #fff;
}
.treebox ul {
  flex: 1;
  padding-top: 1px;
  overflow: hidden;
}
li {
  display: flex;
  align-items: center;
  height: 18px;
  white-space: nowrap;
}
li .g0 {
  width: 24px;
  height: 18px;
}
li .g1 {
  width: 41px;
  height: 18px;
}
li .g2 {
  width: 61px;
  height: 18px;
}
.nicon {
  width: 15px;
  height: 16px;
  overflow: visible;
}
.chip {
  width: 11px;
  height: 11px;
  margin-left: 5px;
  border: 1px solid #111;
}
.l0 {
  padding-left: 4px;
}
.l1 {
  padding-left: 6px;
}
.l2 {
  margin-left: 2px;
  padding: 0 1px;
}
.selected {
  color: #e8f2fa;
  background: #173f6a;
  outline: 1px dotted #9a8a60;
  outline-offset: -1px;
}
.tscroll {
  margin-right: 2px;
}
.tscroll .thumb {
  margin-bottom: auto;
}
.btn {
  height: 22px;
  border: 1px solid #8a8a8a;
  border-radius: 3px;
  background: linear-gradient(#f4f4f4 50%, #dddddd 50%, #d4d4d4);
  box-shadow: inset 0 0 0 1px #fafafa;
}
.btn:disabled {
  color: #9c9c9c;
  border-color: #b4b4b4;
  background: #f4f4f4;
}
.ok {
  align-self: flex-end;
  width: 74px;
  margin: 11px -10px 0 0;
}
.actions {
  display: flex;
  flex: 1;
  flex-direction: column;
  gap: 18px;
}
fieldset {
  display: flex;
  flex-direction: column;
  align-items: center;
  gap: 6px;
  height: 99px;
  margin: 0;
  padding: 2px 0 0;
  border: 1px solid #dadada;
  border-radius: 3px;
}
.actions fieldset {
  margin-top: -3px;
}
.actions .empty {
  height: 200px;
  margin: 0;
}
legend {
  padding: 0 2px;
  margin-left: 5px;
}
fieldset .btn {
  width: 73px;
}
.palette {
  left: 433px;
  top: 289px;
  width: 461px;
  height: 364px;
  padding: 0 3px 3px;
  border: 1px solid #1d3444;
  border-right-color: #2a8d92;
  border-bottom-color: #2a6f78;
  border-radius: 6px 6px 2px 2px;
  background: linear-gradient(75deg, #dbe9f5, #b6d0e8 30%, #c6daee 40%, #a9c6e2 55%, #bdd4ea 70%, #a6c8e4);
}
.palette h2 {
  padding: 2px 0 0 2px;
}
.palette .close {
  border-color: #5c2a2a;
  background: linear-gradient(#e8a89a, #d06552 45%, #b8321e 50%, #d0644c);
}
.palette .content {
  gap: 11px;
  padding: 5px 0 0 10px;
  border: 1px solid #6c8296;
}
.colors {
  width: 208px;
}
h3 {
  font-size: 11px;
}
.colors .second {
  margin-top: 19px;
}
.swatches {
  display: grid;
  grid-template-columns: repeat(8, 18px);
  gap: 7px;
  margin-top: 8px;
  padding-left: 3px;
}
.swatches.custom {
  margin-top: 6px;
}
.swatches button {
  height: 15px;
  border: 1px solid #dcdcdc;
  border-top-color: #777;
  border-left-color: #777;
}
.swatches .black {
  background: #000;
}
.swatches .picked {
  border-color: #000;
  box-shadow: 0 0 0 1px #fff, 0 0 0 2px #000;
  outline: 1px dotted #000;
  outline-offset: 3px;
}
.tick {
  display: flex;
  align-items: center;
  gap: 3px;
  margin-top: 17px;
}
.tick input {
  appearance: none;
  width: 13px;
  height: 13px;
  border: 1px solid #8e8f8f;
  background: linear-gradient(135deg, #cfd3d8, #f8f8f8);
  box-shadow: inset 0 0 0 1px #f4f4f4;
}
.define {
  width: 100%;
  margin-top: 12px;
}
.row {
  display: flex;
  gap: 8px;
  margin-top: 9px;
}
.row .btn {
  flex: 1;
}
.default {
  border-color: #3a8ca0;
  box-shadow: inset 0 0 0 1px #5fd0e4;
}
.mixer {
  display: flex;
  flex-direction: column;
  width: 219px;
  padding-top: 16px;
}
.pickers {
  display: flex;
  align-items: flex-end;
  height: 187px;
}
.spectrum {
  position: relative;
  width: 175px;
  height: 187px;
  border-top: 1px solid #999;
  overflow: hidden;
  background: linear-gradient(rgba(128, 128, 128, 0), #808080), linear-gradient(90deg, #f00, #ff0 17%, #0f0 34%, #0ff 50%, #00f 67%, #f0f 84%, #f00);
}
.spectrum svg {
  position: absolute;
  right: 47px;
  bottom: 0;
  width: 20px;
  height: 10px;
  fill: #000;
}
.lum {
  width: 11px;
  height: 187px;
  margin: 0 2px 0 17px;
  border-top: 1px solid #999;
  border-left: 1px solid #aaa;
  background: linear-gradient(#fff, #000);
}
.pointer {
  width: 15px;
  height: 29px;
  margin-bottom: -14px;
  fill: #000;
}
.values {
  display: flex;
  margin-top: 7px;
}
.sample {
  display: flex;
  flex-direction: column;
  align-items: center;
  gap: 2px;
  width: 58px;
}
.sample i {
  width: 58px;
  height: 41px;
  background: #000;
}
.channels {
  display: grid;
  grid-template-columns: 33px 27px 44px 27px;
  gap: 3px 4px;
  align-items: center;
  justify-items: end;
}
.channels input {
  width: 27px;
  height: 20px;
  padding-left: 2px;
  border: 1px solid #9aa3a6;
  background: #fff;
  font-size: 12px;
}
.add {
  width: 212px;
  margin: 20px 0 0 3px;
}
.arrows {
  position: absolute;
  inset: 0;
  width: 100%;
  height: 100%;
  pointer-events: none;
  filter: drop-shadow(2px 2px 2px rgba(0, 0, 0, 0.5));
}
.long path {
  stroke: #cf1118;
  stroke-width: 4;
  stroke-linecap: round;
}
.heads path {
  fill: #f20d0d;
  stroke: #c01010;
}
.note {
  position: absolute;
  width: 38px;
  height: 37px;
  border: 1px solid #b8b04c;
  border-radius: 9px;
  background: #fdfd74;
  box-shadow: 2px 2px 3px rgba(0, 0, 0, 0.5);
  color: #c81408;
  font: bold 20px/36px "DejaVu Sans", sans-serif;
  text-align: center;
}
.one {
  left: 263px;
  top: 183px;
}
.two {
  left: 339px;
  top: 295px;
}
.three {
  left: 719px;
  top: 161px;
}
</style>
